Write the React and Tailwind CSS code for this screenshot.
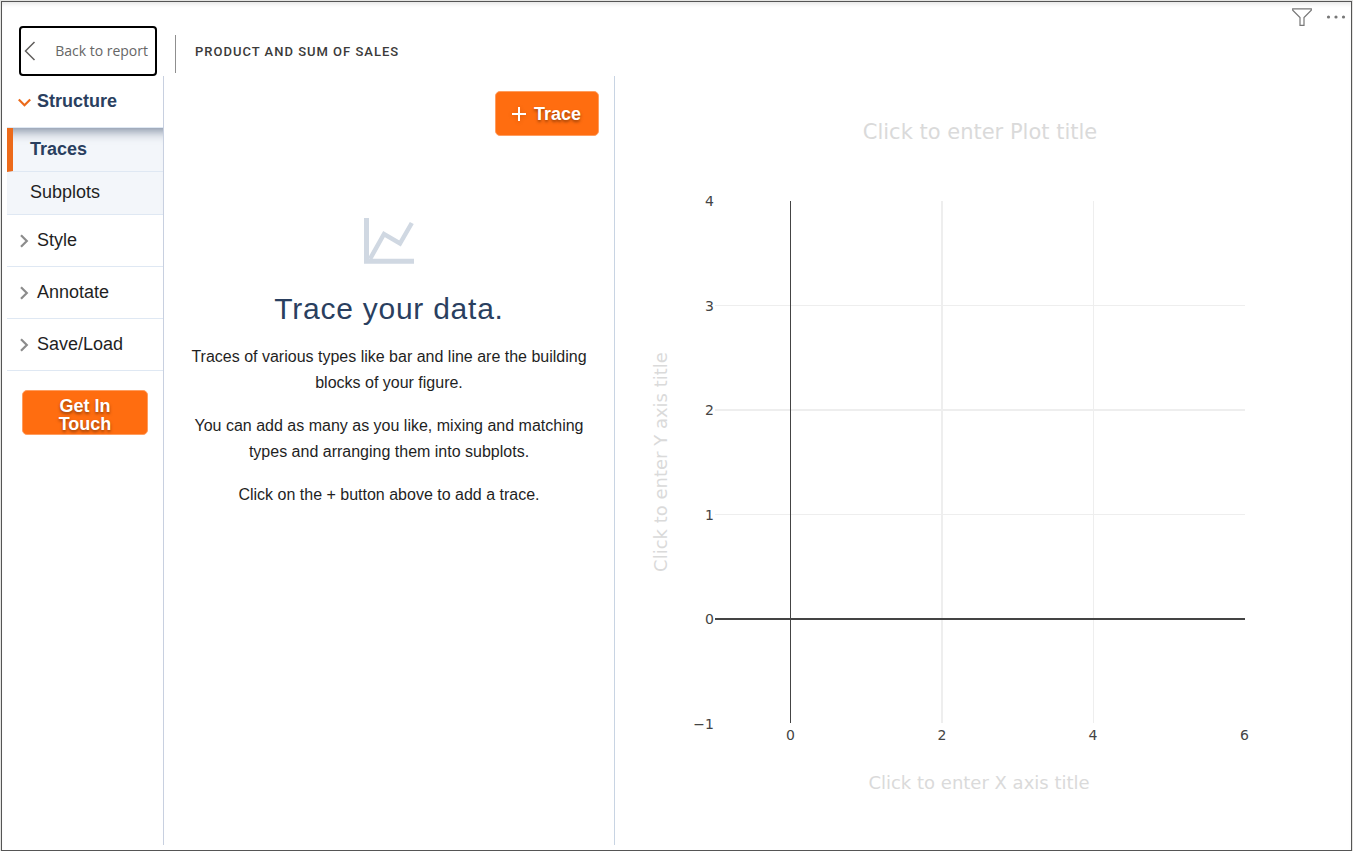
import React from "react";

const folds = ["Style", "Annotate", "Save/Load"];

const buttonStyle =
  "cursor-pointer rounded-[5px] border border-[#ff9d5f] bg-[#ff6d10] font-bold text-white [text-shadow:0_2px_3px_rgba(70,30,0,0.55)]";

function Header() {
  return (
    <header className="flex h-[74px] shrink-0 items-start justify-between">
      <div className="flex items-start pt-6 pl-[17px]">
        <button
          type="button"
          className="flex h-[50px] w-[138px] cursor-pointer items-center justify-between rounded-[4px] border-2 border-black pr-[7px] pl-[3px] font-['Open_Sans',sans-serif] text-sm text-[#666666]"
        >
          <svg width="12" height="20" viewBox="0 0 12 20" fill="none" stroke="#605e5c" strokeWidth="1.5" aria-hidden="true">
            <path d="M10.5 1 1.5 10l9 9" />
          </svg>
          Back to report
        </button>
        <div className="mt-[9px] ml-[18px] flex h-[38px] items-center border-l border-[#8f8f8f] pb-1 pl-[19px]">
          <h1 className="font-['Roboto',sans-serif] text-[13px] font-medium tracking-[1px] text-[#3b3a39] uppercase">
            Product and sum of sales
          </h1>
        </div>
      </div>
      <div className="flex items-center gap-3.5 pt-1.5 pr-[5px]">
        <button type="button" aria-label="Filters" className="cursor-pointer">
          <svg width="20" height="18" viewBox="0 0 20 18" fill="none" stroke="#777" strokeWidth="1.2" className="block">
            <path d="M.7.8h18.6v1.4L12 9.6v7.7H8V9.6L.7 2.2z" />
          </svg>
        </button>
        <button type="button" aria-label="More options" className="cursor-pointer">
          <svg width="20" height="4" viewBox="0 0 20 4" fill="#777" className="block">
            <circle cx="2.5" cy="2" r="1.6" />
            <circle cx="10" cy="2" r="1.6" />
            <circle cx="17.5" cy="2" r="1.6" />
          </svg>
        </button>
      </div>
    </header>
  );
}

function Sidebar() {
  return (
    <nav className="w-[157px] shrink-0 border-r border-[#c8d0e0] text-lg text-[#1f1f1f]">
      <button
        type="button"
        className="flex h-[52px] w-full cursor-pointer items-center gap-1.5 border-b border-[#dfe8f3] pb-0.5 pl-[11px] font-bold text-[#2a3f5f]"
      >
        <svg width="13" height="10" viewBox="0 0 13 10" fill="none" stroke="#ec6a1a" strokeWidth="2.2" aria-hidden="true" className="mt-1">
          <path d="m.8 1.5 5.7 5.7 5.7-5.7" />
        </svg>
        Structure
      </button>
      <div className="bg-[#f3f6fa] shadow-[inset_0_14px_12px_-11px_rgba(42,63,95,0.6)]">
        <a href="#traces" className="flex h-11 items-center border-b border-l-6 border-b-[#dfe8f3] border-l-[#ec6a1a] pb-0.5 pl-[17px] font-bold text-[#2a3f5f]">
          Traces
        </a>
        <a href="#subplots" className="flex h-[43px] items-center border-b border-[#dfe8f3] pb-0.5 pl-[23px]">
          Subplots
        </a>
      </div>
      {folds.map((name) => (
        <button
          key={name}
          type="button"
          className="flex h-[52px] w-full cursor-pointer items-center gap-2 border-b border-[#dfe8f3] pb-0.5 pl-[13px]"
        >
          <svg width="9" height="14" viewBox="0 0 9 14" fill="none" stroke="#8c8c8c" strokeWidth="2.2" aria-hidden="true" className="mt-0.5">
            <path d="m1 1.2 5.8 5.8L1 12.8" />
          </svg>
          {name}
        </button>
      ))}
      <div className="px-[15px] pt-[19px]">
        <button type="button" className={buttonStyle + " h-[45px] w-full px-6 pt-1 text-lg leading-[18px]"}>
          Get In Touch
        </button>
      </div>
    </nav>
  );
}

function TracePanel() {
  return (
    <main className="w-[451px] shrink-0 border-r border-[#c8d4e3] px-[15px] pt-[15px]">
      <div className="flex justify-end">
        <button type="button" className={buttonStyle + " flex h-[45px] w-[104px] items-center gap-2 pl-4 text-lg"}>
          <svg width="14" height="14" viewBox="0 0 14 14" stroke="#fff" strokeWidth="2" aria-hidden="true" className="mt-px drop-shadow-sm">
            <path d="M7 0v14M0 7h14" />
          </svg>
          Trace
        </button>
      </div>
      <div className="mt-[82px] flex flex-col items-center text-center text-[#1f1f1f]">
        <svg width="50" height="46" viewBox="0 0 50 46" fill="none" stroke="#d0d8e2" aria-hidden="true">
          <path d="M2.5 0v43.3H50" strokeWidth="5" />
          <path d="M6 41 20 16l16 9.5L47.8 5" strokeWidth="4.5" />
        </svg>
        <h2 className="mt-6 text-[30px] leading-[42px] tracking-wide text-[#2a3f5f]">Trace your data.</h2>
        <div className="flex flex-col gap-[17px] pt-3.5 text-base leading-[26px]">
          <p>
            Traces of various types like bar and line are the building
            <br />
            blocks of your figure.
          </p>
          <p>
            You can add as many as you like, mixing and matching
            <br />
            types and arranging them into subplots.
          </p>
          <p>Click on the + button above to add a trace.</p>
        </div>
      </div>
    </main>
  );
}

const yTicks = [
  ["4", 125],
  ["3", 230],
  ["2", 334],
  ["1", 439],
  ["0", 543],
  ["−1", 648],
];
const xTicks = [
  ["0", 175.5],
  ["2", 327],
  ["4", 478],
  ["6", 629.5],
];

function Plot() {
  return (
    <section className="min-w-0 flex-1 pr-1.5">
      <svg viewBox="0 0 730 769" className="h-full w-full font-['DejaVu_Sans',sans-serif]" role="img" aria-label="Empty plot">
        <g stroke="#eeeeee">
          <path d="M100 229.5h530M100 438.5h530M478.5 125v522" />
          <path d="M100 334h530M327 125v522" strokeWidth="2" />
        </g>
        <path d="M175.5 125v522" stroke="#444" />
        <path d="M100 543h530" stroke="#444" strokeWidth="2" />
        <g fill="#444" fontSize="14">
          {yTicks.map(([label, y]) => (
            <text key={label} x="99" y={y + 5} textAnchor="end">
              {label}
            </text>
          ))}
          {xTicks.map(([label, x]) => (
            <text key={label} x={x} y="664" textAnchor="middle">
              {label}
            </text>
          ))}
        </g>
        <g fill="#dadada" textAnchor="middle">
          <text x="365" y="63" fontSize="21">
            Click to enter Plot title
          </text>
          <text x="364" y="713" fontSize="18">
            Click to enter X axis title
          </text>
          <text transform="translate(52 386) rotate(-90)" fontSize="18">
            Click to enter Y axis title
          </text>
        </g>
      </svg>
    </section>
  );
}

export default function App() {
  return (
    <div className="h-screen bg-[#e4e4e2] px-px pt-px font-['Liberation_Sans',sans-serif]">
      <div className="flex h-full flex-col border border-[#555] bg-white pb-[5px] shadow-[inset_0_4px_4px_-2px_rgba(0,0,0,0.1)]">
        <Header />
        <div className="flex min-h-0 flex-1 pl-[5px]">
          <Sidebar />
          <TracePanel />
          <Plot />
        </div>
      </div>
    </div>
  );
}
